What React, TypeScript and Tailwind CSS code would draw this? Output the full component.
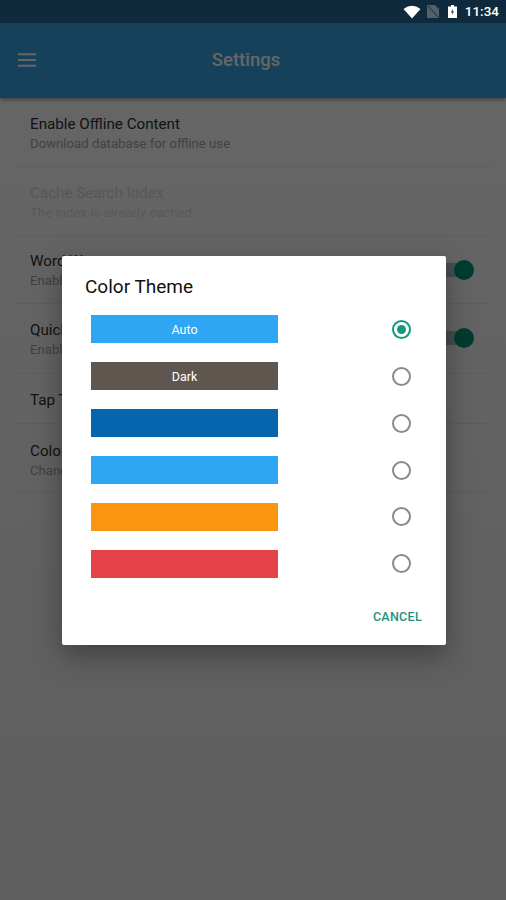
export default function App() {
  const rows = [
    { t: "Enable Offline Content", s: "Download database for offline use", h: "h-[69px]", m: "mt-[17px]" },
    { t: "Cache Search Index", s: "The index is already cached", h: "h-[69px]", m: "mt-[17px]", off: true },
    { t: "Word Wrap", s: "Enable word wrap", h: "h-[68px]", m: "mt-[16px]", on: true },
    { t: "Quick Search", s: "Enable quick search", h: "h-[70px]", m: "mt-[17px]", on: true },
    { t: "Tap To Search", h: "h-[50px]", m: "mt-[17px]" },
    { t: "Color Theme", s: "Change the color theme", h: "h-[69px]", m: "mt-[18px]" },
  ];
  const swatches = [
    { c: "bg-[#2ea6f3]", l: "Auto", on: true },
    { c: "bg-[#5f564f]", l: "Dark" },
    { c: "bg-[#0565ad]" },
    { c: "bg-[#2ea6f3]" },
    { c: "bg-[#fb950f]", up: true },
    { c: "bg-[#e34246]", up: true },
  ];
  return (
    <div className="relative w-[506px] h-[900px] overflow-hidden bg-white font-['Roboto',sans-serif]">
      <div className="h-[23px] bg-[#0f2a3c] relative z-30 flex items-center justify-end pr-[7px]">
        <svg width="18" height="14" viewBox="0 0 18 14" className="mr-[6px]">
          <path d="M0.5 4 Q9 -2.5 17.5 4 L9 13.5 Z" fill="#fff" />
        </svg>
        <svg width="12" height="13" viewBox="0 0 12 13" className="mr-[9px]">
          <path d="M0 0 H8 L12 4 V13 H0 Z" fill="#51616c" />
          <path d="M1 1 L11 12" stroke="#0f2a3c" strokeWidth="1" />
        </svg>
        <svg width="9" height="13" viewBox="0 0 9 13" className="mr-[8px]">
          <path d="M3 0 H6 V1.5 H9 V13 H0 V1.5 H3 Z" fill="#fff" />
          <path d="M5 3.5 L3 7.5 H4.5 L4 10 L6 6.5 H4.6 Z" fill="#0f2a3c" />
        </svg>
        <span className="text-[13.5px] leading-none font-medium text-white">11:34</span>
      </div>
      <div className="relative z-0 h-[75px] bg-[#35a4e3] shadow-[0_2px_4px_rgba(0,0,0,0.35)] flex items-center justify-center pr-[14px]">
        <svg width="18" height="14" viewBox="0 0 18 14" className="absolute left-[18px] top-[30px]">
          <path d="M0 1.2 H18 M0 7 H18 M0 12.8 H18" stroke="#fff" strokeWidth="2" />
        </svg>
        <span className="text-[18.5px] font-medium text-white">Settings</span>
      </div>
      <div className="px-[16px]">
        {rows.map((r) => (
          <div key={r.t} className={`${r.h} relative border-b border-[#efefef] pl-[14px] flex flex-col justify-start`}>
            <div className={`${r.m} text-[15.2px] leading-[18px] ${r.off ? "text-[#dcdcdc]" : "text-[#303030]"}`}>{r.t}</div>
            {r.s && <div className={`text-[13.2px] leading-[16px] mt-[3px] ${r.off ? "text-[#e2e2e2]" : "text-[#a8a8a8]"}`}>{r.s}</div>}
            {r.on && (
              <div className="absolute right-[18px] top-[27px] w-[34px] h-[14px] rounded-full bg-[#b0c8c2]">
                <div className="absolute right-[-2px] top-[-3px] w-[20px] h-[20px] rounded-full bg-[#009a7c]" />
              </div>
            )}
          </div>
        ))}
      </div>
      <div className="absolute inset-x-0 top-[23px] bottom-0 z-10 bg-[rgba(0,0,0,0.6)]" />
      <div className="absolute inset-x-0 top-[23px] bottom-0 z-10 bg-gradient-to-b from-transparent to-[rgba(0,0,0,0.08)]" />
      <div className="absolute z-20 left-[62px] top-[256px] w-[384px] h-[389px] bg-white rounded-[2px] shadow-[0_10px_28px_rgba(0,0,0,0.35)] flex flex-col">
        <div className="mt-[19px] ml-[23px] text-[19px] leading-[24px] text-[#111]">Color Theme</div>
        <div className="mt-[16px] flex flex-col gap-[19px]">
          {swatches.map((s, i) => (
            <div key={i} className="flex items-center h-[28px]">
              <div className={`ml-[29px] w-[187px] h-[28px] pt-[2px] ${s.c} flex items-center justify-center text-[12.5px] text-white`}>{s.l}</div>
              <div className={`ml-[114px] w-[19px] h-[19px] rounded-full border-2 flex items-center justify-center ${s.up ? "mb-[2px]" : ""} ${s.on ? "border-[#119a80]" : "border-[#8a8a8a]"}`}>
                {s.on && <div className="w-[9px] h-[9px] rounded-full bg-[#119a80]" />}
              </div>
            </div>
          ))}
        </div>
        <div className="absolute right-[24px] top-[354px] text-[12.5px] leading-[14px] font-medium tracking-[0.3px] text-[#1c917c]">CANCEL</div>
      </div>
    </div>
  );
}
